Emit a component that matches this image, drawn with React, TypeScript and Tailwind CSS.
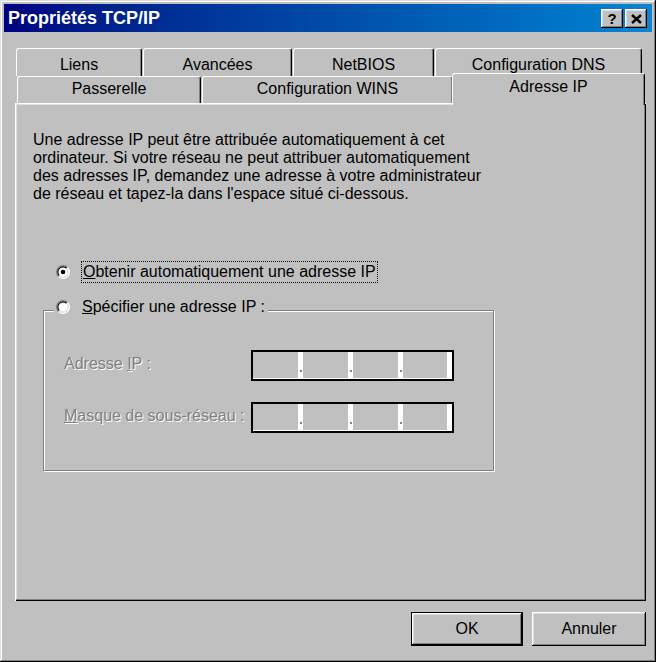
const raised =
  "shadow-[inset_-1px_-1px_0_#000,inset_1px_1px_0_#fff,inset_-2px_-2px_0_#808080,inset_2px_2px_0_#dfdfdf]";

function Radio({ checked }: { checked?: boolean }) {
  return (
    <svg width="14" height="14" viewBox="0 0 12 12" className="shrink-0">
      <circle cx="6" cy="6" r="5" fill="#fff" />
      <path d="M2.11 9.89 A5.5 5.5 0 0 1 9.89 2.11" fill="none" stroke="#808080" strokeWidth="1" />
      <path d="M9.89 2.11 A5.5 5.5 0 0 1 2.11 9.89" fill="none" stroke="#fff" strokeWidth="1" />
      <path d="M2.82 9.18 A4.5 4.5 0 0 1 9.18 2.82" fill="none" stroke="#000" strokeWidth="1" />
      <path d="M9.18 2.82 A4.5 4.5 0 0 1 2.82 9.18" fill="none" stroke="#dfdfdf" strokeWidth="1" />
      {checked && <circle cx="6" cy="6" r="2" fill="#000" />}
    </svg>
  );
}

function Tab({ label, w, selected, pt }: { label: string; w: string; selected?: boolean; pt: string }) {
  return (
    <div
      className={`${w} ${pt} ${selected ? "relative z-10 -mt-[3px] h-[32px] -ml-[1px]" : "h-full"} bg-[#c0c0c0] border-t border-l border-white border-r border-r-black rounded-t-[3px] shadow-[inset_-1px_0_0_#808080] text-center leading-[18px] whitespace-nowrap`}
    >
      {label}
    </div>
  );
}

function IpBox() {
  const seg = (
    <>
      <div className="w-[45px] h-full" />
      <div className="w-[5px] h-full bg-white relative">
        <div className="absolute left-[2px] top-[18px] w-[2px] h-[2px] bg-[#808080]" />
      </div>
    </>
  );
  return (
    <div className="flex w-[203px] h-[31px] border-2 border-black shadow-[inset_0_-1px_0_#fff] bg-[#c0c0c0]">
      {seg}
      {seg}
      {seg}
      <div className="w-[44px] h-full" />
      <div className="w-[5px] h-full bg-white" />
    </div>
  );
}

const disabled = "text-[#808080] [text-shadow:1px_1px_0_#fff]";

export default function App() {
  return (
    <div
      className={`w-[656px] h-[662px] bg-[#c0c0c0] p-[4px] flex flex-col font-['Liberation_Sans',Arial,sans-serif] text-[16px] text-black shadow-[inset_-1px_-1px_0_#000,inset_1px_1px_0_#dfdfdf,inset_-2px_-2px_0_#808080,inset_2px_2px_0_#fff]`}
    >
      {/* title bar */}
      <div className="h-[28px] flex items-center bg-linear-to-r from-[#000080] to-[#1084d0] pl-[4px] pr-[5px]">
        <span className="flex-1 text-white font-bold text-[18px] leading-[20px]">Propriétés TCP/IP</span>
        <div className="flex gap-[2px] mt-[1px]">
          <div className={`w-[22px] h-[19px] bg-[#c0c0c0] ${raised} flex items-center justify-center font-bold text-[15px] leading-none pb-[1px]`}>
            ?
          </div>
          <div className={`w-[22px] h-[19px] bg-[#c0c0c0] ${raised} flex items-center justify-center`}>
            <svg width="11" height="10" viewBox="0 0 11 10">
              <path d="M1 1 L10 9 M10 1 L1 9" stroke="#000" strokeWidth="2.4" />
            </svg>
          </div>
        </div>
      </div>

      <div className="flex flex-col pl-[11px] pr-[6px]">
        {/* tabs */}
        <div className="flex h-[28px] pl-[1px] mt-[16px]">
          <Tab label="Liens" w="w-[126px]" pt="pt-[7px]" />
          <div className="ml-[1px] h-full">
            <Tab label="Avancées" w="w-[149px]" pt="pt-[7px]" />
          </div>
          <div className="ml-[1px] h-full">
            <Tab label="NetBIOS" w="w-[141px]" pt="pt-[7px]" />
          </div>
          <div className="ml-[1px] h-full">
            <Tab label="Configuration DNS" w="w-[207px]" pt="pt-[7px]" />
          </div>
        </div>
        <div className="flex h-[27px] pl-[2px] items-start">
          <div className="h-full">
            <Tab label="Passerelle" w="w-[184px]" pt="pt-[3px]" />
          </div>
          <div className="ml-[1px] h-full">
            <Tab label="Configuration WINS" w="w-[251px]" pt="pt-[3px]" />
          </div>
          <Tab label="Adresse IP" w="w-[193px]" pt="pt-[4px]" selected />
        </div>

        {/* panel */}
        <div className="h-[498px] flex flex-col items-start pl-[18px] pt-[28px] shadow-[inset_1px_1px_0_#fff,inset_-1px_-1px_0_#000,inset_-2px_-2px_0_#808080,inset_2px_2px_0_#dfdfdf]">
          <p className="leading-[18px] whitespace-nowrap">
            Une adresse IP peut être attribuée automatiquement à cet
            <br />
            ordinateur. Si votre réseau ne peut attribuer automatiquement
            <br />
            des adresses IP, demandez une adresse à votre administrateur
            <br />
            de réseau et tapez-la dans l'espace situé ci-dessous.
          </p>

          <div className="mt-[58px] ml-[23px] flex items-center h-[22px]">
            <Radio checked />
            <span className="ml-[11px] h-[22px] flex items-center px-[1px] border border-dotted border-black leading-[18px] whitespace-nowrap">
              <span>
                <u>O</u>btenir automatiquement une adresse IP
              </span>
            </span>
          </div>

          <div className="mt-[27px] ml-[10px] w-[451px] h-[161px] flex flex-col border border-[#808080] shadow-[inset_1px_1px_0_#fff,1px_1px_0_#fff]">
            <div className="-mt-[15px] ml-[10px] self-start flex items-center h-[22px] bg-[#c0c0c0] pl-[2px] pr-[3px]">
              <Radio />
              <span className="ml-[12px] leading-[18px] whitespace-nowrap">
                <u>S</u>pécifier une adresse IP :
              </span>
            </div>

            <div className="mt-[32px] flex items-center h-[31px]">
              <span className={`w-[207px] pl-[20px] pb-[4px] leading-[18px] whitespace-nowrap ${disabled}`}>
                Adresse <u>I</u>P :
              </span>
              <IpBox />
            </div>
            <div className="mt-[21px] flex items-center h-[31px]">
              <span className={`w-[207px] pl-[20px] pb-[4px] leading-[18px] whitespace-nowrap ${disabled}`}>
                <u>M</u>asque de sous-réseau :
              </span>
              <IpBox />
            </div>
          </div>
        </div>

        {/* buttons */}
        <div className="flex justify-end gap-[9px] mt-[11px]">
          <div className={`w-[112px] h-[34px] border border-black bg-[#c0c0c0] ${raised} flex items-center justify-center leading-[18px]`}>
            OK
          </div>
          <div className={`w-[114px] h-[34px] bg-[#c0c0c0] ${raised} flex items-center justify-center leading-[18px]`}>
            Annuler
          </div>
        </div>
      </div>
    </div>
  );
}
